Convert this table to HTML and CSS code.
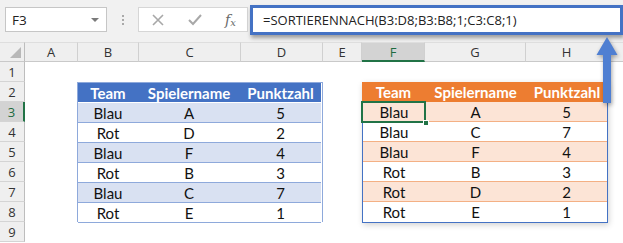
FILE: index.html
```html
<!DOCTYPE html>
<html>
<head>
<meta charset="utf-8">
<link rel="stylesheet" href="styles.css">
</head>
<body>
<div class="app">
  <div class="fbar">
    <div class="namebox"><span class="nb-text">F3</span><span class="dd"></span></div>
    <div class="grip"><i></i><i></i><i></i></div>
    <div class="btns">
      <svg class="ico" width="12" height="12" viewBox="0 0 12 12"><path d="M1 1 L11 11 M11 1 L1 11" stroke="#a8a8a8" stroke-width="1.6" fill="none"/></svg>
      <svg class="ico" width="14" height="12" viewBox="0 0 14 12"><path d="M1 6 L5 10 L13 1" stroke="#a8a8a8" stroke-width="2" fill="none"/></svg>
      <span class="fx">f<sub>x</sub></span>
    </div>
    <div class="formula">=SORTIERENNACH(B3:D8;B3:B8;1;C3:C8;1)</div>
  </div>
  <div class="sheet">
    <div class="ch corner"><span class="tri"></span></div>
    <div class="ch">A</div>
    <div class="ch">B</div>
    <div class="ch">C</div>
    <div class="ch">D</div>
    <div class="ch">E</div>
    <div class="ch sel">F</div>
    <div class="ch">G</div>
    <div class="ch">H</div>
    <div class="ch last"></div>

    <div class="rh r1">1</div>
    <div class="rh r2">2</div>
    <div class="rh r3 sel">3</div>
    <div class="rh r4">4</div>
    <div class="rh r5">5</div>
    <div class="rh r6">6</div>
    <div class="rh r7">7</div>
    <div class="rh r8">8</div>
    <div class="rh r9">9</div>

    <div class="tbl blue">
      <div class="th">Team</div><div class="th">Spielername</div><div class="th">Punktzahl</div>
      <div class="td band">Blau</div><div class="td band">A</div><div class="td band">5</div>
      <div class="td">Rot</div><div class="td">D</div><div class="td">2</div>
      <div class="td band">Blau</div><div class="td band">F</div><div class="td band">4</div>
      <div class="td">Rot</div><div class="td">B</div><div class="td">3</div>
      <div class="td band">Blau</div><div class="td band">C</div><div class="td band">7</div>
      <div class="td last">Rot</div><div class="td last">E</div><div class="td last">1</div>
    </div>

    <div class="tbl orange">
      <div class="ohead">
        <div class="th">Team</div><div class="th">Spielername</div><div class="th">Punktzahl</div>
      </div>
      <div class="spill">
        <div class="td band">Blau</div><div class="td band">A</div><div class="td band">5</div>
        <div class="td">Blau</div><div class="td">C</div><div class="td">7</div>
        <div class="td band">Blau</div><div class="td band">F</div><div class="td band">4</div>
        <div class="td">Rot</div><div class="td">B</div><div class="td">3</div>
        <div class="td band">Rot</div><div class="td band">D</div><div class="td band">2</div>
        <div class="td last">Rot</div><div class="td last">E</div><div class="td last">1</div>
        <div class="cursor"><span class="handle"></span></div>
      </div>
    </div>
  </div>
  <svg class="arrow" width="30" height="72" viewBox="0 0 30 72">
    <path d="M14 2 L24.5 20 L18 20 L18 68 L10 68 L10 20 L3.5 20 Z" fill="#4f7fd2"/>
  </svg>
</div>
</body>
</html>
```

FILE: styles.css
```css
* { box-sizing: border-box; }
html, body { margin: 0; padding: 0; background: #fff; }
.app {
  position: relative;
  width: 623px;
  height: 243px;
  overflow: hidden;
  font-family: "Open Sans", "Noto Sans", sans-serif;
}
.fbar {
  height: 42px;
  background: #f1f1f1;
  display: flex;
  align-items: flex-start;
  padding: 7px 0 0 5px;
}
.namebox {
  width: 102px;
  height: 25px;
  background: #fff;
  border: 1px solid #c6c6c6;
  display: flex;
  align-items: center;
  justify-content: space-between;
  padding: 0 7px 0 6px;
  font-size: 13.5px;
  color: #222;
}
.dd {
  width: 0; height: 0;
  border-left: 4px solid transparent;
  border-right: 4px solid transparent;
  border-top: 4px solid #7a7a7a;
}
.grip {
  width: 31px;
  height: 25px;
  display: flex;
  flex-direction: column;
  align-items: center;
  justify-content: center;
  gap: 2px;
}
.grip i {
  display: block;
  width: 2px; height: 2px;
  background: #a9a9a9;
}
.btns {
  width: 110px;
  height: 25px;
  background: #fff;
  border: 1px solid #d6d6d6;
  display: flex;
  align-items: center;
  padding: 0 0 0 13px;
  gap: 24px;
}
.fx {
  font-family: "DejaVu Serif", "Liberation Serif", serif;
  font-style: italic;
  font-size: 14px;
  color: #6a6a6a;
  margin-left: -1px;
}
.fx sub { font-size: 10px; vertical-align: -1px; }
.formula {
  margin: -2px 0 0 2px;
  width: 373px;
  height: 30px;
  background: #fff;
  border: 3px solid #4472c4;
  box-shadow: 1px 3px 4px rgba(0,0,0,0.35);
  font-size: 13px;
  color: #222;
  display: flex;
  align-items: center;
  padding-left: 10px;
}

.sheet {
  display: grid;
  grid-template-columns: 25px 53px 61px 102px 82px 39px 63px 101px 82px 15px;
  grid-template-rows: repeat(10, 20px);
  font-family: "Lato", "Open Sans", sans-serif;
}
.ch {
  grid-row: 1;
  background: #efefef;
  border-top: 1px solid #dedede;
  border-right: 1px solid #d0d0d0;
  border-bottom: 1px solid #c9c9c9;
  font-family: "Open Sans", "Noto Sans", sans-serif;
  font-size: 13px;
  color: #333;
  display: flex;
  align-items: center;
  justify-content: center;
}
.ch.sel {
  background: #d3d3d3;
  color: #1e6b3f;
  border-bottom: 2px solid #217346;
}
.ch.last { border-right: none; }
.corner { position: relative; border-right-color: #bdbdbd; }
.tri {
  position: absolute;
  right: 3px;
  bottom: 3px;
  width: 0; height: 0;
  border-left: 11px solid transparent;
  border-bottom: 11px solid #b8b8b8;
}
.rh {
  grid-column: 1;
  background: #efefef;
  border-right: 1px solid #bdbdbd;
  border-bottom: 1px solid #d4d4d4;
  font-family: "Open Sans", "Noto Sans", sans-serif;
  font-size: 13px;
  color: #333;
  display: flex;
  align-items: center;
  justify-content: center;
}
.rh.sel {
  background: #d3d3d3;
  color: #1e6b3f;
  border-right: 2px solid #217346;
}
.r1 { grid-row: 2; } .r2 { grid-row: 3; } .r3 { grid-row: 4; }
.r4 { grid-row: 5; } .r5 { grid-row: 6; } .r6 { grid-row: 7; }
.r7 { grid-row: 8; } .r8 { grid-row: 9; } .r9 { grid-row: 10; }

.tbl { grid-row: 3 / 10; font-size: 15px; color: #111; }
.th, .td {
  height: 20px;
  display: flex;
  align-items: center;
  justify-content: center;
}
.th { font-weight: bold; color: #fff; }

.blue {
  grid-column: 3 / 6;
  display: grid;
  grid-template-columns: 60px 102px 81px;
  grid-auto-rows: 20px;
  border: 1px solid #8ea9db;
  border-bottom: none;
  margin-left: -1px;
}
.blue .th { background: #4472c4; height: 19px; }
.blue .td { border-bottom: 1px solid #8ea9db; height: 20px; }
.blue .band { background: #d9e1f2; }

.orange {
  grid-column: 7 / 10;
  box-shadow: 1px 2px 6px rgba(0,0,0,0.18);
  align-self: start;
}
.ohead {
  display: grid;
  grid-template-columns: 63px 101px 82px;
  background: #ed7d31;
  height: 20px;
}
.ohead .th { height: 20px; }
.spill {
  position: relative;
  display: grid;
  grid-template-columns: 62px 101px 81px;
  grid-auto-rows: 20px;
  border: 1px solid #4472c4;
  border-top: none;
}
.spill .td { border-bottom: 1px solid #f4b084; }
.spill .td.last { border-bottom: none; height: 19px; }
.spill .band { background: #fce4d6; }
.cursor {
  position: absolute;
  left: -2px;
  top: -1px;
  width: 65px;
  height: 22px;
  border: 2px solid #217346;
}
.handle {
  position: absolute;
  right: -5px;
  bottom: -5px;
  width: 6px;
  height: 6px;
  background: #217346;
  border: 1px solid #fff;
}
.arrow {
  position: absolute;
  left: 593px;
  top: 35px;
  filter: drop-shadow(1px 2px 2px rgba(0,0,0,0.35));
}
```
